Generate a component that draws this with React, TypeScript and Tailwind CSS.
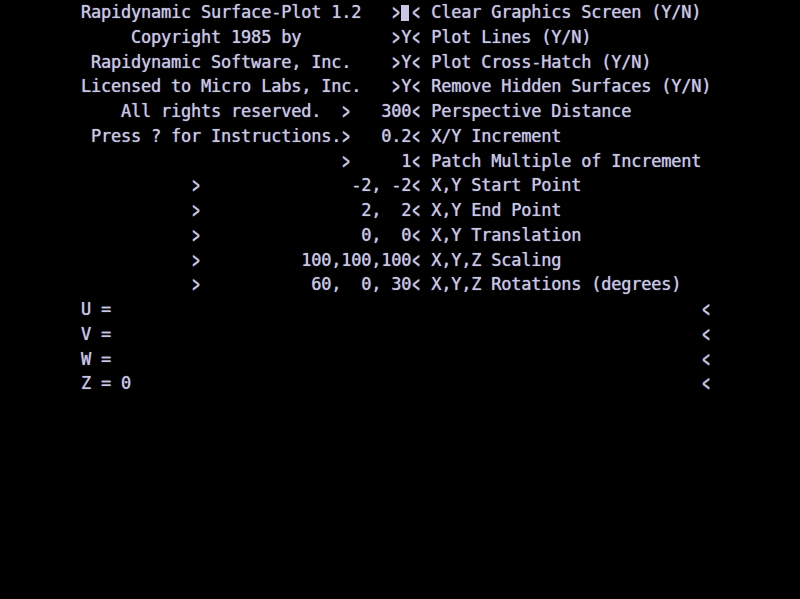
const rows: string[] = [
  "        Rapidynamic Surface-Plot 1.2   >#< Clear Graphics Screen (Y/N)",
  "             Copyright 1985 by         >Y< Plot Lines (Y/N)",
  "         Rapidynamic Software, Inc.    >Y< Plot Cross-Hatch (Y/N)",
  "        Licensed to Micro Labs, Inc.   >Y< Remove Hidden Surfaces (Y/N)",
  "            All rights reserved.  >   300< Perspective Distance",
  "         Press ? for Instructions.>   0.2< X/Y Increment",
  "                                  >     1< Patch Multiple of Increment",
  "                   >               -2, -2< X,Y Start Point",
  "                   >                2,  2< X,Y End Point",
  "                   >                0,  0< X,Y Translation",
  "                   >          100,100,100< X,Y,Z Scaling",
  "                   >           60,  0, 30< X,Y,Z Rotations (degrees)",
  "        U =                                                           <",
  "        V =                                                           <",
  "        W =                                                           <",
  "        Z = 0                                                         <",
];

// split a row into plain runs and the special glyphs
function Row({ text }: { text: string }) {
  const parts: React.ReactNode[] = [];
  let buf = "";
  const flush = (k: number) => {
    if (buf) parts.push(<span key={"t" + k}>{buf}</span>);
    buf = "";
  };
  for (let i = 0; i < text.length; i++) {
    const c = text[i];
    if (c === ">" || c === "<") {
      flush(i);
      parts.push(
        <span key={i} className="inline-block w-[10px] text-center scale-x-[0.7] scale-y-[1.3]">
          {c}
        </span>
      );
    } else if (c === "#") {
      flush(i);
      parts.push(
        <span key={i} className="inline-block w-[10px] align-[-3px]">
          <span className="block w-[8px] h-[16px] bg-[#c8c8e4]" />
        </span>
      );
    } else {
      buf += c;
    }
  }
  flush(text.length);
  return <div className="h-[24.75px] whitespace-pre">{parts}</div>;
}

export default function App() {
  return (
    <div className="w-full h-[599px] bg-black overflow-hidden">
      <div className="pl-[1px] font-['DejaVu_Sans_Mono',monospace] text-[17px] tracking-[-0.23px] leading-[24.75px] text-[#c8c8e4] [text-shadow:0_0_1px_#a8a8d0]">
        {rows.map((r, i) => (
          <Row key={i} text={r} />
        ))}
      </div>
    </div>
  );
}
